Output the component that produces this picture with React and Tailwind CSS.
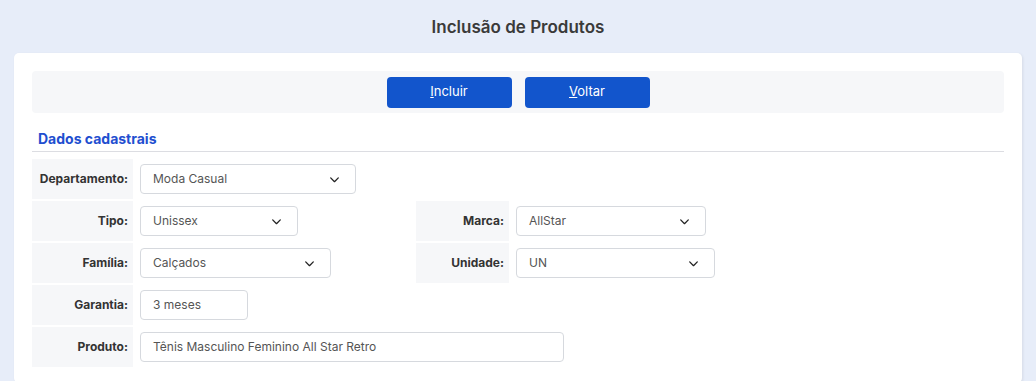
import React from "react";

const Chevron = () => (
  <svg width="13" height="13" viewBox="0 0 24 24" fill="none" stroke="#222" strokeWidth="2.4" strokeLinecap="round" strokeLinejoin="round">
    <path d="M5 9l7 7 7-7" />
  </svg>
);

const Label = ({ children, w = "w-[101px]" }) => (
  <div className={`${w} h-10 bg-[#f6f7f9] flex items-center justify-end pr-[5px] text-[12px] font-bold text-[#333]`}>
    {children}
  </div>
);

const Select = ({ value, w }) => (
  <div className={`${w} h-[30px] border border-[#d6d9de] rounded-[4px] bg-white flex items-center justify-between pl-[12px] pr-[14px] text-[12px] text-[#555]`}>
    <span>{value}</span>
    <Chevron />
  </div>
);

const Input = ({ value, w }) => (
  <div className={`${w} h-[30px] border border-[#d6d9de] rounded-[4px] bg-white flex items-center pl-[12px] text-[12px] text-[#555]`}>
    {value}
  </div>
);

const App = () => {
  return (
    <div className="min-h-screen bg-[#e7edf9] px-[14px] pb-4" style={{ fontFamily: "Inter, 'Noto Sans', sans-serif" }}>
      <h1 className="h-[53px] flex items-center justify-center text-[17px] font-semibold text-[#3a3a3a] pt-[3px]">
        Inclusão de Produtos
      </h1>
      <div className="bg-white rounded-[5px] shadow-[1px_1px_3px_rgba(0,0,0,0.08)] px-[18px] pt-[18px] pb-4">
        <div className="h-[42px] bg-[#f6f7f9] rounded-[4px] flex items-center justify-center gap-[13px]">
          <button className="w-[125px] h-[31px] bg-[#1255cc] rounded-[4px] text-white text-[13px]">
            <span className="underline">I</span>ncluir
          </button>
          <button className="w-[125px] h-[31px] bg-[#1255cc] rounded-[4px] text-white text-[13px]">
            <span className="underline">V</span>oltar
          </button>
        </div>

        <div className="mt-[15px] border-b border-[#dcdde2] pb-[2px] pl-[6px] text-[14px] font-bold text-[#1f4fd0]">
          Dados cadastrais
        </div>

        <div className="mt-[7px] flex flex-col gap-[2px]">
          <div className="flex items-center gap-[7px]">
            <Label>Departamento:</Label>
            <Select value="Moda Casual" w="w-[216px]" />
          </div>
          <div className="flex items-center">
            <div className="w-[384px] flex items-center gap-[7px]">
              <Label>Tipo:</Label>
              <Select value="Unissex" w="w-[158px]" />
            </div>
            <div className="flex items-center gap-[7px]">
              <Label w="w-[93px]">Marca:</Label>
              <Select value="AllStar" w="w-[190px]" />
            </div>
          </div>
          <div className="flex items-center">
            <div className="w-[384px] flex items-center gap-[7px]">
              <Label>Família:</Label>
              <Select value="Calçados" w="w-[191px]" />
            </div>
            <div className="flex items-center gap-[7px]">
              <Label w="w-[93px]">Unidade:</Label>
              <Select value="UN" w="w-[199px]" />
            </div>
          </div>
          <div className="flex items-center gap-[7px]">
            <Label>Garantia:</Label>
            <Input value="3 meses" w="w-[108px]" />
          </div>
          <div className="flex items-center gap-[7px]">
            <Label>Produto:</Label>
            <Input value="Tênis Masculino Feminino All Star Retro" w="w-[424px]" />
          </div>
        </div>
      </div>
    </div>
  );
};

export default App;
